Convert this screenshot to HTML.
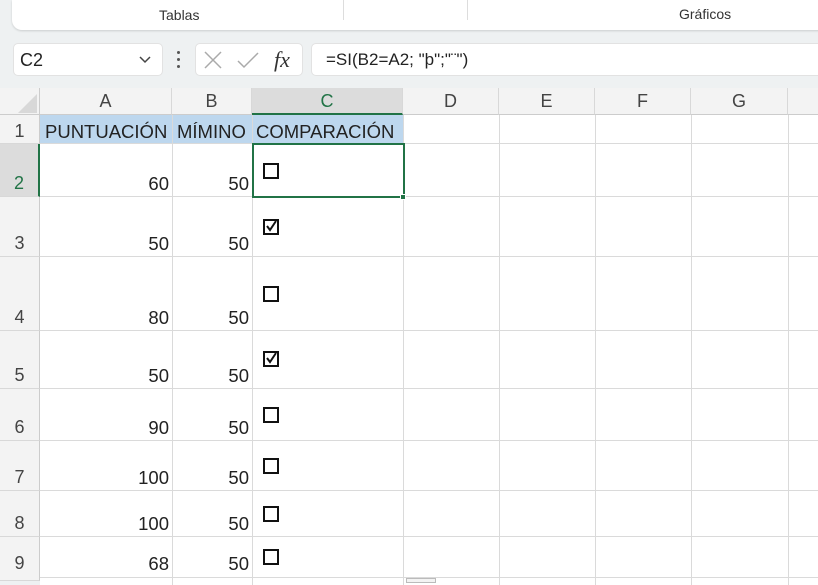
<!DOCTYPE html><html><head><style>
body{margin:0;width:818px;height:581px;overflow:hidden;background:#eef1f2;font-family:"Liberation Sans",Arial,sans-serif;position:relative}
div{position:absolute;box-sizing:border-box}
.t{font-size:14px;color:#333}
.cell{font-size:18.5px;color:#222}
.vl{width:1px;background:#dadada}
.hl{height:1px;background:#dadada}
.rh{left:0;width:40px;background:#f3f3f3;color:#444;font-size:18px;text-align:center;border-right:1px solid #ccc;border-bottom:1px solid #d8d8d8}
.ch{top:88px;height:27px;background:#f3f3f3;color:#444;font-size:18px;text-align:center;line-height:27px;border-right:1px solid #d8d8d8;border-bottom:1px solid #ccc}
.cb{width:16px;height:16px;border:2px solid #111;left:263px}
.num{font-size:18.5px;color:#222;text-align:right}
</style></head><body>
<div style="left:12px;top:0;width:820px;height:30px;background:#fff;border-radius:0 0 0 10px;box-shadow:0 1px 2px rgba(0,0,0,.15)"></div>
<div class="t" style="left:159px;top:7px">Tablas</div>
<div class="t" style="left:679px;top:6px">Gráficos</div>
<div style="left:343px;top:0;width:1px;height:20px;background:#ddd"></div>
<div style="left:467px;top:0;width:1px;height:20px;background:#ddd"></div>
<div style="left:13px;top:43px;width:150px;height:33px;background:#fff;border-radius:5px;border:1px solid #e2e2e2"></div>
<div style="left:20px;top:50px;font-size:18px;color:#222">C2</div>
<svg style="position:absolute;left:138px;top:55px" width="14" height="10"><path d="M2 2l5 5 5-5" stroke="#444" fill="none" stroke-width="1.5"/></svg>
<div style="left:177px;top:51px;width:3px;height:3px;background:#555;border-radius:50%"></div>
<div style="left:177px;top:58px;width:3px;height:3px;background:#555;border-radius:50%"></div>
<div style="left:177px;top:65px;width:3px;height:3px;background:#555;border-radius:50%"></div>
<div style="left:195px;top:43px;width:108px;height:33px;background:#fff;border-radius:5px;border:1px solid #e2e2e2"></div>
<svg style="position:absolute;left:200px;top:48px" width="100" height="24"><path d="M5 4l16 16M21 4L5 20" stroke="#aaa" stroke-width="1.5"/><path d="M38 13l6 6 14-14" stroke="#aaa" stroke-width="1.5" fill="none"/><text x="74" y="19" font-family="Liberation Serif" font-style="italic" font-size="22" fill="#333">fx</text></svg>
<div style="left:311px;top:43px;width:520px;height:33px;background:#fff;border-radius:5px 0 0 5px;border:1px solid #e2e2e2"></div>
<div style="left:326px;top:50px;font-size:17px;color:#222">=SI(B2=A2; "þ";"¨")</div>
<div style="left:0;top:88px;width:40px;height:27px;background:#f3f3f3;border-right:1px solid #ccc;border-bottom:1px solid #ccc"></div>
<svg style="position:absolute;left:18px;top:94px" width="20" height="20"><path d="M19 0V19H0Z" fill="#d8d8d8"/></svg>
<div class="ch" style="left:40px;width:132px">A</div>
<div class="ch" style="left:172px;width:80px">B</div>
<div class="ch" style="left:252px;width:151px;background:#dcdcdc;color:#217346;border-bottom:2px solid #217346">C</div>
<div class="ch" style="left:403px;width:96px">D</div>
<div class="ch" style="left:499px;width:96px">E</div>
<div class="ch" style="left:595px;width:96px">F</div>
<div class="ch" style="left:691px;width:97px">G</div>
<div class="ch" style="left:788px;width:40px"></div>
<div style="left:40px;top:115px;width:800px;height:470px;background:#fff"></div>
<div style="left:40px;top:115px;width:363px;height:29px;background:#bdd7ee"></div>
<div class="vl" style="left:172px;top:115px;height:470px"></div>
<div class="vl" style="left:252px;top:115px;height:470px"></div>
<div class="vl" style="left:403px;top:115px;height:470px"></div>
<div class="vl" style="left:499px;top:115px;height:470px"></div>
<div class="vl" style="left:595px;top:115px;height:470px"></div>
<div class="vl" style="left:691px;top:115px;height:470px"></div>
<div class="vl" style="left:788px;top:115px;height:470px"></div>
<div class="hl" style="left:40px;top:143px;width:800px"></div>
<div class="hl" style="left:40px;top:196px;width:800px"></div>
<div class="hl" style="left:40px;top:256px;width:800px"></div>
<div class="hl" style="left:40px;top:330px;width:800px"></div>
<div class="hl" style="left:40px;top:388px;width:800px"></div>
<div class="hl" style="left:40px;top:440px;width:800px"></div>
<div class="hl" style="left:40px;top:490px;width:800px"></div>
<div class="hl" style="left:40px;top:536px;width:800px"></div>
<div class="hl" style="left:40px;top:577px;width:800px"></div>
<div class="cell" style="left:45px;top:121px">PUNTUACIÓN</div>
<div class="cell" style="left:177px;top:121px">MÍMINO</div>
<div class="cell" style="left:256px;top:121px">COMPARACIÓN</div>
<div class="rh" style="top:115px;height:29px;padding-top:6px">1</div>
<div class="rh" style="top:144px;height:53px;padding-top:29px;background:#dcdcdc;color:#217346;border-right:2px solid #217346">2</div>
<div class="rh" style="top:197px;height:60px;padding-top:36px">3</div>
<div class="rh" style="top:257px;height:74px;padding-top:50px">4</div>
<div class="rh" style="top:331px;height:58px;padding-top:34px">5</div>
<div class="rh" style="top:389px;height:52px;padding-top:28px">6</div>
<div class="rh" style="top:441px;height:50px;padding-top:26px">7</div>
<div class="rh" style="top:491px;height:46px;padding-top:22px">8</div>
<div class="rh" style="top:537px;height:44px;padding-top:16px">9</div>
<div class="num" style="left:40px;width:129px;top:173px">60</div><div class="num" style="left:172px;width:77px;top:173px">50</div>
<div class="num" style="left:40px;width:129px;top:233px">50</div><div class="num" style="left:172px;width:77px;top:233px">50</div>
<div class="num" style="left:40px;width:129px;top:307px">80</div><div class="num" style="left:172px;width:77px;top:307px">50</div>
<div class="num" style="left:40px;width:129px;top:365px">50</div><div class="num" style="left:172px;width:77px;top:365px">50</div>
<div class="num" style="left:40px;width:129px;top:417px">90</div><div class="num" style="left:172px;width:77px;top:417px">50</div>
<div class="num" style="left:40px;width:129px;top:467px">100</div><div class="num" style="left:172px;width:77px;top:467px">50</div>
<div class="num" style="left:40px;width:129px;top:513px">100</div><div class="num" style="left:172px;width:77px;top:513px">50</div>
<div class="num" style="left:40px;width:129px;top:553px">68</div><div class="num" style="left:172px;width:77px;top:553px">50</div>
<div class="cb" style="top:163px"></div>
<div class="cb" style="top:219px"></div><svg style="position:absolute;left:265px;top:220px" width="13" height="13"><path d="M2 6l3 4 6-9" stroke="#111" stroke-width="2" fill="none"/></svg>
<div class="cb" style="top:286px"></div>
<div class="cb" style="top:351px"></div><svg style="position:absolute;left:265px;top:352px" width="13" height="13"><path d="M2 6l3 4 6-9" stroke="#111" stroke-width="2" fill="none"/></svg>
<div class="cb" style="top:407px"></div>
<div class="cb" style="top:458px"></div>
<div class="cb" style="top:506px"></div>
<div class="cb" style="top:549px"></div>
<div style="left:252px;top:143px;width:153px;height:55px;border:2px solid #217346"></div>
<div style="left:400px;top:194px;width:6px;height:6px;background:#217346;border:1px solid #fff"></div>
<div style="left:406px;top:578px;width:30px;height:5px;border:1px solid #bbb;background:#f3f3f3"></div>
</body></html>
